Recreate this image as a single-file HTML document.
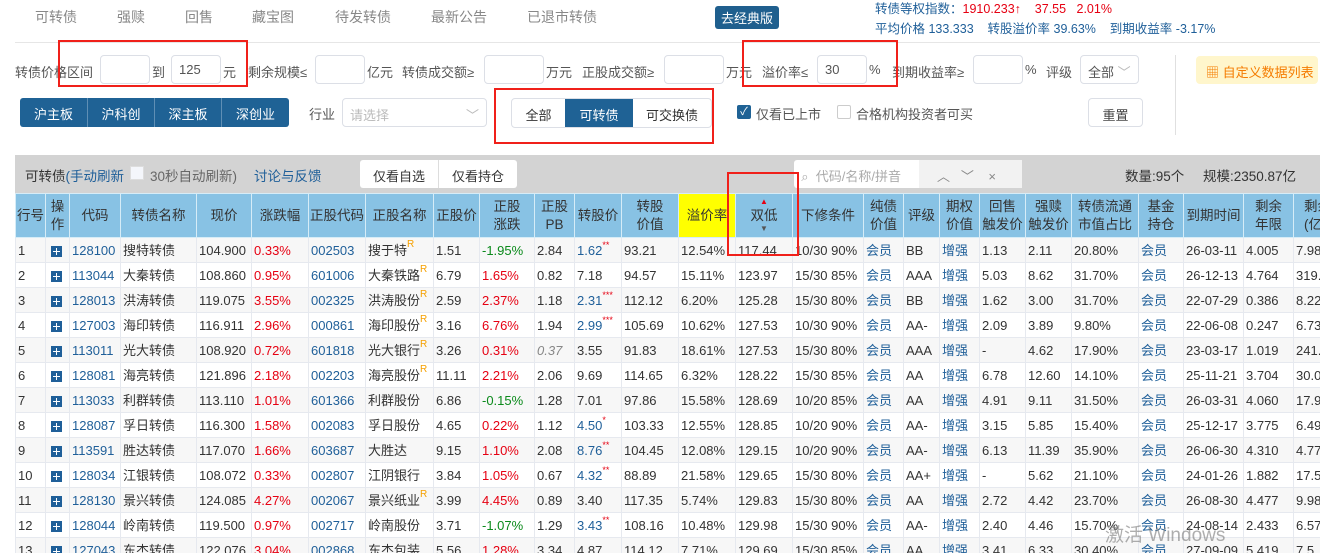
<!DOCTYPE html>
<html><head><meta charset="utf-8">
<style>
*{box-sizing:border-box;margin:0;padding:0}
body{width:1320px;height:548px;overflow:hidden;background:#fff;font-family:"Liberation Sans","Noto Sans CJK SC",sans-serif;font-size:13px;color:#333;position:relative}
.a{position:absolute;white-space:nowrap}
.nav{color:#888;font-size:14px;top:7px}
.inp{position:absolute;border:1px solid #dcdfe6;border-radius:4px;height:29px;background:#fff;font-size:13px;padding:6px 7px;color:#555}
.lbl{position:absolute;top:62px;font-size:13px;color:#555}
.red{position:absolute;border:2px solid #f0201a}
.btn{position:absolute;border:1px solid #dcdfe6;border-radius:4px;background:#fff;text-align:center;color:#444}
table{border-collapse:collapse;table-layout:fixed}
td,th{border:1px solid #e6e9ef;overflow:hidden;white-space:nowrap;height:25px;padding:0 2px;font-size:13px;text-align:left;font-weight:normal;line-height:23px}
th{background:#88c2e4;color:#333;height:44px;text-align:center;line-height:18px;border-color:#d6ecf7;font-size:13.5px;position:relative;padding:0}
tr:nth-child(even) td{background:#f7f7f7}
.b{color:#1f5f99}.r{color:#e60012}.g{color:#0b8a1b}.o{color:#f5a000;font-size:10px;vertical-align:top;line-height:12px}
.s{color:#e60012;font-size:9px;vertical-align:top;line-height:12px}
.plus{display:inline-block;width:11px;height:11px;background:#1f5f99;position:relative;vertical-align:middle;margin-left:3px}
.plus:before{content:"";position:absolute;left:2px;top:5px;width:7px;height:1px;background:#fff}
.plus:after{content:"";position:absolute;left:5px;top:2px;width:1px;height:7px;background:#fff}
</style></head><body>
<div class="a nav" style="left:35px">可转债</div>
<div class="a nav" style="left:117px">强赎</div>
<div class="a nav" style="left:185px">回售</div>
<div class="a nav" style="left:252px">藏宝图</div>
<div class="a nav" style="left:335px">待发转债</div>
<div class="a nav" style="left:431px">最新公告</div>
<div class="a nav" style="left:527px">已退市转债</div>
<div class="a" style="left:715px;top:6px;background:#1f5f8e;color:#fff;border-radius:3px;padding:2px 6px;font-size:13px">去经典版</div>
<div class="a" style="left:875px;top:-2px;font-size:12.5px;color:#1f5f99">转债等权指数：<span class="r">1910.233↑&nbsp;&nbsp;&nbsp;&nbsp;37.55&nbsp;&nbsp;&nbsp;2.01%</span></div>
<div class="a" style="left:875px;top:18px;font-size:12.5px;color:#1f5f99">平均价格 133.333&nbsp;&nbsp;&nbsp;&nbsp;转股溢价率 39.63%&nbsp;&nbsp;&nbsp;&nbsp;到期收益率 -3.17%</div>
<div class="a" style="left:15px;top:42px;width:1305px;height:1px;background:#e6e6e6"></div>

<div class="lbl" style="left:15px">转债价格区间</div>
<div class="inp" style="left:100px;top:55px;width:50px"></div>
<div class="lbl" style="left:152px">到</div>
<div class="inp" style="left:171px;top:55px;width:50px">125</div>
<div class="lbl" style="left:223px">元</div>
<div class="lbl" style="left:248px">剩余规模≤</div>
<div class="inp" style="left:315px;top:55px;width:50px"></div>
<div class="lbl" style="left:367px">亿元</div>
<div class="lbl" style="left:402px">转债成交额≥</div>
<div class="inp" style="left:484px;top:55px;width:60px"></div>
<div class="lbl" style="left:546px">万元</div>
<div class="lbl" style="left:582px">正股成交额≥</div>
<div class="inp" style="left:664px;top:55px;width:60px"></div>
<div class="lbl" style="left:726px">万元</div>
<div class="lbl" style="left:762px">溢价率≤</div>
<div class="inp" style="left:817px;top:55px;width:50px">30</div>
<div class="lbl" style="left:869px">%</div>
<div class="lbl" style="left:892px">到期收益率≥</div>
<div class="inp" style="left:973px;top:55px;width:50px"></div>
<div class="lbl" style="left:1025px">%</div>
<div class="lbl" style="left:1046px">评级</div>
<div class="inp" style="left:1080px;top:55px;width:59px">全部 <span style="color:#bbb">﹀</span></div>
<div class="a" style="left:1175px;top:55px;width:1px;height:80px;background:#e0e0e0"></div>
<div class="a" style="left:1196px;top:56px;width:122px;height:28px;background:#fff6cc;border-radius:4px;color:#f57c00;font-size:13px;padding:6px 0 0 10px">▦ 自定义数据列表</div>

<div class="a" style="left:20px;top:98px;height:29px;width:269px;background:#1f6295;border-radius:3px;color:#fff;font-size:13px;display:flex">
<div style="width:68px;text-align:center;padding-top:6px;border-right:1px solid #5f8fb5">沪主板</div>
<div style="width:67px;text-align:center;padding-top:6px;border-right:1px solid #5f8fb5">沪科创</div>
<div style="width:67px;text-align:center;padding-top:6px;border-right:1px solid #5f8fb5">深主板</div>
<div style="width:67px;text-align:center;padding-top:6px">深创业</div></div>
<div class="lbl" style="left:309px;top:104px">行业</div>
<div class="inp" style="left:342px;top:98px;width:145px;color:#bbb">请选择<span style="float:right">﹀</span></div>
<div class="a" style="left:511px;top:98px;width:201px;height:30px;border:1px solid #dcdfe6;border-radius:4px;display:flex;font-size:13px">
<div style="width:53px;text-align:center;padding-top:6px">全部</div>
<div style="width:68px;text-align:center;padding-top:6px;background:#1f6295;color:#fff">可转债</div>
<div style="width:78px;text-align:center;padding-top:6px">可交换债</div></div>
<div class="a" style="left:737px;top:105px;width:14px;height:14px;background:#1f6295;border-radius:2px;color:#fff;font-size:11px;text-align:center;line-height:14px">✓</div>
<div class="lbl" style="left:756px;top:104px">仅看已上市</div>
<div class="a" style="left:837px;top:105px;width:14px;height:14px;border:1px solid #ccc;border-radius:2px"></div>
<div class="lbl" style="left:856px;top:104px">合格机构投资者可买</div>
<div class="btn" style="left:1088px;top:98px;width:55px;height:29px;padding-top:6px">重置</div>

<div class="red" style="left:58px;top:40px;width:190px;height:47px"></div>
<div class="red" style="left:742px;top:40px;width:156px;height:47px"></div>
<div class="red" style="left:494px;top:88px;width:220px;height:56px"></div>

<div class="a" style="left:15px;top:155px;width:1305px;height:39px;background:#d3d3d3"></div>
<div class="a" style="left:25px;top:165px;font-size:13.5px">可转债<span class="b">(手动刷新</span></div>
<div class="a" style="left:130px;top:166px;width:14px;height:14px;background:#f4f6fb;border:1px solid #ddd"></div>
<div class="a" style="left:150px;top:165px;font-size:13.5px;color:#666">30秒自动刷新)</div>
<div class="a b" style="left:254px;top:165px;font-size:13.5px">讨论与反馈</div>
<div class="a" style="left:360px;top:160px;width:157px;height:28px;background:#fff;border-radius:3px;display:flex;font-size:13px">
<div style="width:79px;text-align:center;padding-top:6px;border-right:1px solid #ddd">仅看自选</div><div style="width:78px;text-align:center;padding-top:6px">仅看持仓</div></div>
<div class="a" style="left:794px;top:160px;width:228px;height:28px;background:#fff;border-radius:3px;font-size:13px;color:#aaa;padding-top:6px">&nbsp;&nbsp;⌕&nbsp;&nbsp;代码/名称/拼音<span style="position:absolute;left:125px;top:0;height:28px;width:103px;background:#f2f2f2;color:#888;padding-top:6px">&nbsp;&nbsp;&nbsp;&nbsp;&nbsp;︿&nbsp;&nbsp;&nbsp;﹀&nbsp;&nbsp;&nbsp;&nbsp;×</span></div>
<div class="a" style="left:1125px;top:165px;font-size:13.5px">数量:95个&nbsp;&nbsp;&nbsp;&nbsp;&nbsp;规模:2350.87亿</div>

<div class="a" style="left:15px;top:193px;width:1305px;height:360px;overflow:hidden">
<table style="width:1378px">
<colgroup><col style="width:30px"><col style="width:24px"><col style="width:51px"><col style="width:76px"><col style="width:55px"><col style="width:57px"><col style="width:57px"><col style="width:68px"><col style="width:46px"><col style="width:55px"><col style="width:40px"><col style="width:47px"><col style="width:57px"><col style="width:57px"><col style="width:57px"><col style="width:71px"><col style="width:40px"><col style="width:36px"><col style="width:40px"><col style="width:46px"><col style="width:46px"><col style="width:67px"><col style="width:45px"><col style="width:60px"><col style="width:50px"><col style="width:100px"></colgroup>
<tr><th>行号</th><th>操<br>作</th><th>代码</th><th>转债名称</th><th>现价</th><th>涨跌幅</th><th>正股代码</th><th>正股名称</th><th>正股价</th><th>正股<br>涨跌</th><th>正股<br>PB</th><th>转股价</th><th>转股<br>价值</th><th style="background:#ffff00">溢价率</th><th><span style="position:absolute;left:0;right:0;top:4px;color:#e60012;font-size:8px;line-height:8px">▲</span>双低<span style="position:absolute;left:0;right:0;bottom:4px;font-size:8px;line-height:8px;color:#555">▼</span></th><th>下修条件</th><th>纯债<br>价值</th><th>评级</th><th>期权<br>价值</th><th>回售<br>触发价</th><th>强赎<br>触发价</th><th>转债流通<br>市值占比</th><th>基金<br>持仓</th><th>到期时间</th><th>剩余<br>年限</th><th style="text-align:left;padding-left:10px">剩余<br>(亿</th></tr>
<tr><td>1</td><td><i class="plus"></i></td><td class="b">128100</td><td>搜特转债</td><td>104.900</td><td class="r">0.33%</td><td class="b">002503</td><td>搜于特<span class="o">R</span></td><td>1.51</td><td class="g">-1.95%</td><td>2.84</td><td class="b">1.62<span class="s">**</span></td><td>93.21</td><td>12.54%</td><td>117.44</td><td>10/30 90%</td><td class="b">会员</td><td>BB</td><td class="b">增强</td><td>1.13</td><td>2.11</td><td>20.80%</td><td class="b">会员</td><td>26-03-11</td><td>4.005</td><td>7.98</td></tr>
<tr><td>2</td><td><i class="plus"></i></td><td class="b">113044</td><td>大秦转债</td><td>108.860</td><td class="r">0.95%</td><td class="b">601006</td><td>大秦铁路<span class="o">R</span></td><td>6.79</td><td class="r">1.65%</td><td>0.82</td><td>7.18</td><td>94.57</td><td>15.11%</td><td>123.97</td><td>15/30 85%</td><td class="b">会员</td><td>AAA</td><td class="b">增强</td><td>5.03</td><td>8.62</td><td>31.70%</td><td class="b">会员</td><td>26-12-13</td><td>4.764</td><td>319.</td></tr>
<tr><td>3</td><td><i class="plus"></i></td><td class="b">128013</td><td>洪涛转债</td><td>119.075</td><td class="r">3.55%</td><td class="b">002325</td><td>洪涛股份<span class="o">R</span></td><td>2.59</td><td class="r">2.37%</td><td>1.18</td><td class="b">2.31<span class="s">***</span></td><td>112.12</td><td>6.20%</td><td>125.28</td><td>15/30 80%</td><td class="b">会员</td><td>BB</td><td class="b">增强</td><td>1.62</td><td>3.00</td><td>31.70%</td><td class="b">会员</td><td>22-07-29</td><td>0.386</td><td>8.22</td></tr>
<tr><td>4</td><td><i class="plus"></i></td><td class="b">127003</td><td>海印转债</td><td>116.911</td><td class="r">2.96%</td><td class="b">000861</td><td>海印股份<span class="o">R</span></td><td>3.16</td><td class="r">6.76%</td><td>1.94</td><td class="b">2.99<span class="s">***</span></td><td>105.69</td><td>10.62%</td><td>127.53</td><td>10/30 90%</td><td class="b">会员</td><td>AA-</td><td class="b">增强</td><td>2.09</td><td>3.89</td><td>9.80%</td><td class="b">会员</td><td>22-06-08</td><td>0.247</td><td>6.73</td></tr>
<tr><td>5</td><td><i class="plus"></i></td><td class="b">113011</td><td>光大转债</td><td>108.920</td><td class="r">0.72%</td><td class="b">601818</td><td>光大银行<span class="o">R</span></td><td>3.26</td><td class="r">0.31%</td><td style="color:#888;font-style:italic">0.37</td><td>3.55</td><td>91.83</td><td>18.61%</td><td>127.53</td><td>15/30 80%</td><td class="b">会员</td><td>AAA</td><td class="b">增强</td><td>-</td><td>4.62</td><td>17.90%</td><td class="b">会员</td><td>23-03-17</td><td>1.019</td><td>241.</td></tr>
<tr><td>6</td><td><i class="plus"></i></td><td class="b">128081</td><td>海亮转债</td><td>121.896</td><td class="r">2.18%</td><td class="b">002203</td><td>海亮股份<span class="o">R</span></td><td>11.11</td><td class="r">2.21%</td><td>2.06</td><td>9.69</td><td>114.65</td><td>6.32%</td><td>128.22</td><td>15/30 85%</td><td class="b">会员</td><td>AA</td><td class="b">增强</td><td>6.78</td><td>12.60</td><td>14.10%</td><td class="b">会员</td><td>25-11-21</td><td>3.704</td><td>30.0</td></tr>
<tr><td>7</td><td><i class="plus"></i></td><td class="b">113033</td><td>利群转债</td><td>113.110</td><td class="r">1.01%</td><td class="b">601366</td><td>利群股份</td><td>6.86</td><td class="g">-0.15%</td><td>1.28</td><td>7.01</td><td>97.86</td><td>15.58%</td><td>128.69</td><td>10/20 85%</td><td class="b">会员</td><td>AA</td><td class="b">增强</td><td>4.91</td><td>9.11</td><td>31.50%</td><td class="b">会员</td><td>26-03-31</td><td>4.060</td><td>17.9</td></tr>
<tr><td>8</td><td><i class="plus"></i></td><td class="b">128087</td><td>孚日转债</td><td>116.300</td><td class="r">1.58%</td><td class="b">002083</td><td>孚日股份</td><td>4.65</td><td class="r">0.22%</td><td>1.12</td><td class="b">4.50<span class="s">*</span></td><td>103.33</td><td>12.55%</td><td>128.85</td><td>10/20 90%</td><td class="b">会员</td><td>AA-</td><td class="b">增强</td><td>3.15</td><td>5.85</td><td>15.40%</td><td class="b">会员</td><td>25-12-17</td><td>3.775</td><td>6.49</td></tr>
<tr><td>9</td><td><i class="plus"></i></td><td class="b">113591</td><td>胜达转债</td><td>117.070</td><td class="r">1.66%</td><td class="b">603687</td><td>大胜达</td><td>9.15</td><td class="r">1.10%</td><td>2.08</td><td class="b">8.76<span class="s">**</span></td><td>104.45</td><td>12.08%</td><td>129.15</td><td>10/20 90%</td><td class="b">会员</td><td>AA-</td><td class="b">增强</td><td>6.13</td><td>11.39</td><td>35.90%</td><td class="b">会员</td><td>26-06-30</td><td>4.310</td><td>4.77</td></tr>
<tr><td>10</td><td><i class="plus"></i></td><td class="b">128034</td><td>江银转债</td><td>108.072</td><td class="r">0.33%</td><td class="b">002807</td><td>江阴银行</td><td>3.84</td><td class="r">1.05%</td><td>0.67</td><td class="b">4.32<span class="s">**</span></td><td>88.89</td><td>21.58%</td><td>129.65</td><td>15/30 80%</td><td class="b">会员</td><td>AA+</td><td class="b">增强</td><td>-</td><td>5.62</td><td>21.10%</td><td class="b">会员</td><td>24-01-26</td><td>1.882</td><td>17.5</td></tr>
<tr><td>11</td><td><i class="plus"></i></td><td class="b">128130</td><td>景兴转债</td><td>124.085</td><td class="r">4.27%</td><td class="b">002067</td><td>景兴纸业<span class="o">R</span></td><td>3.99</td><td class="r">4.45%</td><td>0.89</td><td>3.40</td><td>117.35</td><td>5.74%</td><td>129.83</td><td>15/30 80%</td><td class="b">会员</td><td>AA</td><td class="b">增强</td><td>2.72</td><td>4.42</td><td>23.70%</td><td class="b">会员</td><td>26-08-30</td><td>4.477</td><td>9.98</td></tr>
<tr><td>12</td><td><i class="plus"></i></td><td class="b">128044</td><td>岭南转债</td><td>119.500</td><td class="r">0.97%</td><td class="b">002717</td><td>岭南股份</td><td>3.71</td><td class="g">-1.07%</td><td>1.29</td><td class="b">3.43<span class="s">**</span></td><td>108.16</td><td>10.48%</td><td>129.98</td><td>15/30 90%</td><td class="b">会员</td><td>AA-</td><td class="b">增强</td><td>2.40</td><td>4.46</td><td>15.70%</td><td class="b">会员</td><td>24-08-14</td><td>2.433</td><td>6.57</td></tr>
<tr><td>13</td><td><i class="plus"></i></td><td class="b">127043</td><td>东杰转债</td><td>122.076</td><td class="r">3.04%</td><td class="b">002868</td><td>东杰包装</td><td>5.56</td><td class="r">1.28%</td><td>3.34</td><td>4.87</td><td>114.12</td><td>7.71%</td><td>129.69</td><td>15/30 85%</td><td class="b">会员</td><td>AA</td><td class="b">增强</td><td>3.41</td><td>6.33</td><td>30.40%</td><td class="b">会员</td><td>27-09-09</td><td>5.419</td><td>7.5</td></tr>
</table>
</div>
<div class="red" style="left:727px;top:172px;width:72px;height:84px"></div>
<div class="a" style="left:1105px;top:520px;font-size:19px;color:rgba(120,120,120,0.6)">激活 Windows</div>
</body></html>
